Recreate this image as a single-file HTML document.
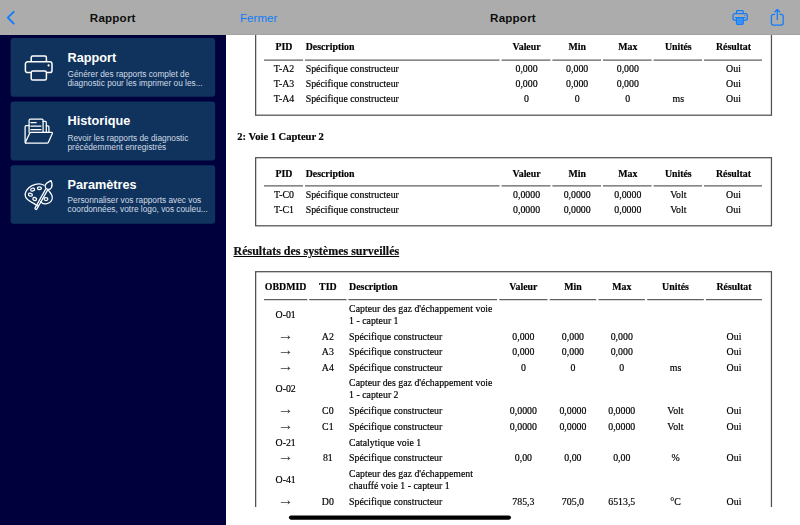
<!DOCTYPE html>
<html lang="fr">
<head>
<meta charset="utf-8">
<title>Rapport</title>
<style>
*{box-sizing:border-box;margin:0;padding:0}
html,body{width:800px;height:525px;overflow:hidden;background:#fff}
body{position:relative;font-family:"Liberation Sans",sans-serif}
#side{position:absolute;left:0;top:0;width:226px;height:525px;background:#00003d;overflow:hidden}
.nav{position:absolute;top:0;height:35px;background:#acacac;z-index:5}
.nav .title{position:absolute;top:10.5px;font-size:11.6px;letter-spacing:.2px;line-height:14px;font-weight:bold;color:#0e0e0e;text-align:center;left:0;width:100%}
#nav1{left:0;width:226.5px;border-right:1px solid #b4b4b4}
#nav2{left:226px;width:574px;border-bottom:1px solid #a3a3a3}
#side h2{position:absolute;left:67.5px;font-size:12.7px;line-height:15px;font-weight:bold;color:#fff;white-space:nowrap}
#side p{position:absolute;left:67.5px;font-size:8.3px;line-height:9.2px;color:#d3dbe6;white-space:nowrap}
#sideart{position:absolute;left:0;top:0}
#fermer{position:absolute;left:14px;top:10.5px;font-size:11.6px;line-height:14px;color:#0f7cf8}
#doc{-webkit-text-stroke:.18px #000;will-change:transform;position:absolute;left:0;top:0;width:800px;height:507px;overflow:hidden;font-family:"Liberation Serif",serif;font-size:9.85px;line-height:12px;color:#000}
.r{position:absolute;left:0;width:800px;height:12px}
.c{position:absolute;top:0;height:12px;text-align:center;white-space:nowrap}
.c.l{text-align:left;padding-left:.7px}
.h{font-weight:bold}
.ar{-webkit-text-stroke:0;position:absolute;left:0;width:100%;top:-2px;color:#3a3a3a;font-weight:normal;font-size:15.8px;line-height:12px}
#lines{position:absolute;left:0;top:0}
h4{position:absolute;left:237.3px;font-size:10.55px;line-height:12px;font-weight:bold;color:#000;white-space:nowrap}
h3{position:absolute;left:233.5px;font-size:12px;line-height:14px;font-weight:bold;color:#111;text-decoration:underline;white-space:nowrap}
#home{position:absolute;left:0;top:513px}
</style>
</head>
<body>
<div id="side">
<svg id="sideart" width="226" height="525" viewBox="0 0 226 525">
<g fill="#0f335d"><rect x="10.6" y="38" width="204.5" height="58.7" rx="3"/><rect x="10.6" y="101.6" width="204.5" height="58.8" rx="3"/><rect x="10.6" y="165.3" width="204.5" height="58.5" rx="3"/></g>
<g transform="translate(10.5 38)" fill="none" stroke="#fff" stroke-linejoin="round" stroke-width="1.5"><path d="M20.7 23.8V19.6a1.5 1.5 0 0 1 1.5-1.5H34.4a1.5 1.5 0 0 1 1.5 1.5V23.8"/>
      <path d="M20.7 34.6H17.1a2.2 2.2 0 0 1-2.2-2.2V26a2.2 2.2 0 0 1 2.2-2.2H39.3a2.2 2.2 0 0 1 2.2 2.2v6.4a2.2 2.2 0 0 1-2.2 2.2H35.9"/>
      <rect x="20.7" y="33.1" width="15.2" height="8.9" rx="1.6"/>
      <circle cx="38.1" cy="27.4" r="1.1" fill="#fff" stroke="none"/></g>
<g transform="translate(10.5 101.5)" fill="none" stroke="#fff" stroke-linejoin="round" stroke-width="1.25" stroke-linecap="round"><g transform="translate(-0.2 0.1)">
      <path d="M18.8 30.7V18.8a1.2 1.2 0 0 1 1.2-1.2H31.6a1.2 1.2 0 0 1 1.2 1.2V30.7"/>
      <path d="M20.6 20.9H25.9M20.6 24.5H30.7M20.6 27.9H30.7"/>
      <path d="M32.8 19.8H35a1 1 0 0 1 1 1V30.7"/>
      <path d="M36 24.2h1.6a1 1 0 0 1 1 1V30.7"/>
      <path d="M18.8 24.1H16a1.2 1.2 0 0 0-1.2 1.2V40.4a1.2 1.2 0 0 0 .6 1.1"/>
      <path d="M20.6 30.7H41.3a.8.8 0 0 1 .75 1.1L38 40.9a1.2 1.2 0 0 1-1.1.7H16a.8.8 0 0 1-.75-1.1L19.5 31.4a1.2 1.2 0 0 1 1.1-.7Z"/></g></g>
<g transform="translate(10.5 165)" fill="none" stroke="#fff" stroke-linejoin="round" stroke-width="1.25" stroke-linecap="round"><path d="M33.6 20.2C30.5 18.4 25.5 18.6 21.5 20.6C16.5 23.1 13.6 27.6 15 31.8C16.2 35.2 20 36.6 23.6 38.6C25.2 39.5 26.3 40.6 27.6 41"/>
      <path d="M30.4 36.6C31.2 38.4 33.6 39.3 36.3 38.7C40 37.9 42.4 34.8 41.7 31.3C41.2 28.9 39.4 27.6 38.2 25.6"/>
      <path d="M35.3 23.9L24.6 42.9a1 1 0 0 0 1.8 1L37.2 24.9"/>
      <path d="M40.5 15.6C41.6 18 42 20.5 41 22.5A3.3 3.3 0 1 1 35 19.6C36 17.8 38.5 16.8 40.5 15.6Z"/>
      <ellipse cx="22.1" cy="24.6" rx="2" ry="1.4" transform="rotate(-15 22.1 24.6)"/>
      <ellipse cx="28.9" cy="23.3" rx="2" ry="1.4"/>
      <ellipse cx="19.9" cy="29.7" rx="2" ry="1.4" transform="rotate(15 19.9 29.7)"/>
      <ellipse cx="24.2" cy="34" rx="1.9" ry="1.5" transform="rotate(25 24.2 34)"/>
      <ellipse cx="35.5" cy="34" rx="1.9" ry="1.5"/></g>
</svg>
<h2 style="top:51px">Rapport</h2>
<p style="top:70px">Générer des rapports complet de<br>diagnostic pour les imprimer ou les...</p>
<h2 style="top:114px">Historique</h2>
<p style="top:134px">Revoir les rapports de diagnostic<br>précédemment enregistrés</p>
<h2 style="top:178px">Paramètres</h2>
<p style="top:196px">Personnaliser vos rapports avec vos<br>coordonnées, votre logo, vos couleu...</p>
</div>
<div id="doc">
<svg id="lines" width="800" height="507" viewBox="0 0 800 507" fill="none" stroke="#505050" stroke-width="1.25"><rect x="255.65" y="20" width="515.8" height="95.2"/><line x1="264" x2="303" y1="60" y2="60" stroke="#606060"/><line x1="305" x2="499.5" y1="60" y2="60" stroke="#606060"/><line x1="501.6" x2="550.5" y1="60" y2="60" stroke="#606060"/><line x1="552.4" x2="601" y1="60" y2="60" stroke="#606060"/><line x1="603" x2="651.6" y1="60" y2="60" stroke="#606060"/><line x1="653.6" x2="702" y1="60" y2="60" stroke="#606060"/><line x1="704" x2="762" y1="60" y2="60" stroke="#606060"/><rect x="255.65" y="157.7" width="515.8" height="68.1"/><line x1="264" x2="303" y1="185.9" y2="185.9" stroke="#606060"/><line x1="305" x2="499.5" y1="185.9" y2="185.9" stroke="#606060"/><line x1="501.6" x2="550.5" y1="185.9" y2="185.9" stroke="#606060"/><line x1="552.4" x2="601" y1="185.9" y2="185.9" stroke="#606060"/><line x1="603" x2="651.6" y1="185.9" y2="185.9" stroke="#606060"/><line x1="653.6" x2="702" y1="185.9" y2="185.9" stroke="#606060"/><line x1="704" x2="762" y1="185.9" y2="185.9" stroke="#606060"/><rect x="255.65" y="271.7" width="515.8" height="328.3"/><line x1="264" x2="307.3" y1="299.55" y2="299.55" stroke="#606060"/><line x1="309.2" x2="346.5" y1="299.55" y2="299.55" stroke="#606060"/><line x1="348.4" x2="497" y1="299.55" y2="299.55" stroke="#606060"/><line x1="499.3" x2="547.5" y1="299.55" y2="299.55" stroke="#606060"/><line x1="549.7" x2="596.2" y1="299.55" y2="299.55" stroke="#606060"/><line x1="598.5" x2="645" y1="299.55" y2="299.55" stroke="#606060"/><line x1="647.2" x2="703.8" y1="299.55" y2="299.55" stroke="#606060"/><line x1="706" x2="762" y1="299.55" y2="299.55" stroke="#606060"/></svg>
<div class="r h" style="top:41px"><span class="c" style="left:264.5px;width:39px">PID</span><span class="c l" style="left:305px;width:194.5px">Description</span><span class="c" style="left:502.1px;width:48.9px">Valeur</span><span class="c" style="left:552.9px;width:48.6px">Min</span><span class="c" style="left:603.5px;width:48.6px">Max</span><span class="c" style="left:654.1px;width:48.4px">Unités</span><span class="c" style="left:704.5px;width:58px">Résultat</span></div>

<div class="r" style="top:63px"><span class="c" style="left:264.5px;width:39px">T-A2</span><span class="c l" style="left:305px;width:194.5px">Spécifique constructeur</span><span class="c" style="left:502.1px;width:48.9px">0,000</span><span class="c" style="left:552.9px;width:48.6px">0,000</span><span class="c" style="left:603.5px;width:48.6px">0,000</span><span class="c" style="left:704.5px;width:58px">Oui</span></div>
<div class="r" style="top:78px"><span class="c" style="left:264.5px;width:39px">T-A3</span><span class="c l" style="left:305px;width:194.5px">Spécifique constructeur</span><span class="c" style="left:502.1px;width:48.9px">0,000</span><span class="c" style="left:552.9px;width:48.6px">0,000</span><span class="c" style="left:603.5px;width:48.6px">0,000</span><span class="c" style="left:704.5px;width:58px">Oui</span></div>
<div class="r" style="top:93px"><span class="c" style="left:264.5px;width:39px">T-A4</span><span class="c l" style="left:305px;width:194.5px">Spécifique constructeur</span><span class="c" style="left:502.1px;width:48.9px">0</span><span class="c" style="left:552.9px;width:48.6px">0</span><span class="c" style="left:603.5px;width:48.6px">0</span><span class="c" style="left:654.1px;width:48.4px">ms</span><span class="c" style="left:704.5px;width:58px">Oui</span></div>
<h4 style="top:131px">2: Voie 1 Capteur 2</h4>
<div class="r h" style="top:168px"><span class="c" style="left:264.5px;width:39px">PID</span><span class="c l" style="left:305px;width:194.5px">Description</span><span class="c" style="left:502.1px;width:48.9px">Valeur</span><span class="c" style="left:552.9px;width:48.6px">Min</span><span class="c" style="left:603.5px;width:48.6px">Max</span><span class="c" style="left:654.1px;width:48.4px">Unités</span><span class="c" style="left:704.5px;width:58px">Résultat</span></div>

<div class="r" style="top:189px"><span class="c" style="left:264.5px;width:39px">T-C0</span><span class="c l" style="left:305px;width:194.5px">Spécifique constructeur</span><span class="c" style="left:502.1px;width:48.9px">0,0000</span><span class="c" style="left:552.9px;width:48.6px">0,0000</span><span class="c" style="left:603.5px;width:48.6px">0,0000</span><span class="c" style="left:654.1px;width:48.4px">Volt</span><span class="c" style="left:704.5px;width:58px">Oui</span></div>
<div class="r" style="top:204px"><span class="c" style="left:264.5px;width:39px">T-C1</span><span class="c l" style="left:305px;width:194.5px">Spécifique constructeur</span><span class="c" style="left:502.1px;width:48.9px">0,0000</span><span class="c" style="left:552.9px;width:48.6px">0,0000</span><span class="c" style="left:603.5px;width:48.6px">0,0000</span><span class="c" style="left:654.1px;width:48.4px">Volt</span><span class="c" style="left:704.5px;width:58px">Oui</span></div>
<h3 style="top:244px">Résultats des systèmes surveillés</h3>
<div class="r h" style="top:281px"><span class="c" style="left:264px;width:43.3px">OBDMID</span><span class="c" style="left:309.2px;width:37.3px">TID</span><span class="c l" style="left:348.4px;width:148.6px">Description</span><span class="c" style="left:499.3px;width:48.2px">Valeur</span><span class="c" style="left:549.7px;width:46.5px">Min</span><span class="c" style="left:598.5px;width:46.5px">Max</span><span class="c" style="left:647.2px;width:56.6px">Unités</span><span class="c" style="left:706px;width:56px">Résultat</span></div>

<div class="r" style="top:309px"><span class="c" style="left:264px;width:43.3px">O-01</span></div><div class="r" style="top:303px"><span class="c l" style="left:348.4px;width:148.6px">Capteur des gaz d'échappement voie</span></div><div class="r" style="top:315px"><span class="c l" style="left:348.4px;width:148.6px">1 - capteur 1</span></div>
<div class="r" style="top:331px"><span class="c" style="left:264px;width:43.3px"><b class="ar">→</b></span><span class="c" style="left:309.2px;width:37.3px">A2</span><span class="c l" style="left:348.4px;width:148.6px">Spécifique constructeur</span><span class="c" style="left:499.3px;width:48.2px">0,000</span><span class="c" style="left:549.7px;width:46.5px">0,000</span><span class="c" style="left:598.5px;width:46.5px">0,000</span><span class="c" style="left:706px;width:56px">Oui</span></div>
<div class="r" style="top:346px"><span class="c" style="left:264px;width:43.3px"><b class="ar">→</b></span><span class="c" style="left:309.2px;width:37.3px">A3</span><span class="c l" style="left:348.4px;width:148.6px">Spécifique constructeur</span><span class="c" style="left:499.3px;width:48.2px">0,000</span><span class="c" style="left:549.7px;width:46.5px">0,000</span><span class="c" style="left:598.5px;width:46.5px">0,000</span><span class="c" style="left:706px;width:56px">Oui</span></div>
<div class="r" style="top:362px"><span class="c" style="left:264px;width:43.3px"><b class="ar">→</b></span><span class="c" style="left:309.2px;width:37.3px">A4</span><span class="c l" style="left:348.4px;width:148.6px">Spécifique constructeur</span><span class="c" style="left:499.3px;width:48.2px">0</span><span class="c" style="left:549.7px;width:46.5px">0</span><span class="c" style="left:598.5px;width:46.5px">0</span><span class="c" style="left:647.2px;width:56.6px">ms</span><span class="c" style="left:706px;width:56px">Oui</span></div>
<div class="r" style="top:383px"><span class="c" style="left:264px;width:43.3px">O-02</span></div><div class="r" style="top:377px"><span class="c l" style="left:348.4px;width:148.6px">Capteur des gaz d'échappement voie</span></div><div class="r" style="top:389px"><span class="c l" style="left:348.4px;width:148.6px">1 - capteur 2</span></div>
<div class="r" style="top:405px"><span class="c" style="left:264px;width:43.3px"><b class="ar">→</b></span><span class="c" style="left:309.2px;width:37.3px">C0</span><span class="c l" style="left:348.4px;width:148.6px">Spécifique constructeur</span><span class="c" style="left:499.3px;width:48.2px">0,0000</span><span class="c" style="left:549.7px;width:46.5px">0,0000</span><span class="c" style="left:598.5px;width:46.5px">0,0000</span><span class="c" style="left:647.2px;width:56.6px">Volt</span><span class="c" style="left:706px;width:56px">Oui</span></div>
<div class="r" style="top:421px"><span class="c" style="left:264px;width:43.3px"><b class="ar">→</b></span><span class="c" style="left:309.2px;width:37.3px">C1</span><span class="c l" style="left:348.4px;width:148.6px">Spécifique constructeur</span><span class="c" style="left:499.3px;width:48.2px">0,0000</span><span class="c" style="left:549.7px;width:46.5px">0,0000</span><span class="c" style="left:598.5px;width:46.5px">0,0000</span><span class="c" style="left:647.2px;width:56.6px">Volt</span><span class="c" style="left:706px;width:56px">Oui</span></div>
<div class="r" style="top:437px"><span class="c" style="left:264px;width:43.3px">O-21</span><span class="c l" style="left:348.4px;width:148.6px">Catalytique voie 1</span></div>
<div class="r" style="top:452px"><span class="c" style="left:264px;width:43.3px"><b class="ar">→</b></span><span class="c" style="left:309.2px;width:37.3px">81</span><span class="c l" style="left:348.4px;width:148.6px">Spécifique constructeur</span><span class="c" style="left:499.3px;width:48.2px">0,00</span><span class="c" style="left:549.7px;width:46.5px">0,00</span><span class="c" style="left:598.5px;width:46.5px">0,00</span><span class="c" style="left:647.2px;width:56.6px">%</span><span class="c" style="left:706px;width:56px">Oui</span></div>
<div class="r" style="top:474px"><span class="c" style="left:264px;width:43.3px">O-41</span></div><div class="r" style="top:468px"><span class="c l" style="left:348.4px;width:148.6px">Capteur des gaz d'échappement</span></div><div class="r" style="top:480px"><span class="c l" style="left:348.4px;width:148.6px">chauffé voie 1 - capteur 1</span></div>
<div class="r" style="top:496px"><span class="c" style="left:264px;width:43.3px"><b class="ar">→</b></span><span class="c" style="left:309.2px;width:37.3px">D0</span><span class="c l" style="left:348.4px;width:148.6px">Spécifique constructeur</span><span class="c" style="left:499.3px;width:48.2px">785,3</span><span class="c" style="left:549.7px;width:46.5px">705,0</span><span class="c" style="left:598.5px;width:46.5px">6513,5</span><span class="c" style="left:647.2px;width:56.6px">°C</span><span class="c" style="left:706px;width:56px">Oui</span></div>
</div>
<div class="nav" id="nav1">
  <svg width="30" height="35" viewBox="0 0 30 35" style="position:absolute;left:0;top:0"><path d="M13.7 11.8L7.8 17.7L13.7 23.6" fill="none" stroke="#0f7cf8" stroke-width="1.9" stroke-linecap="round" stroke-linejoin="round"/></svg>
  <div class="title">Rapport</div>
</div>
<div class="nav" id="nav2">
  <div id="fermer">Fermer</div>
  <div class="title">Rapport</div>
  <svg width="74" height="35" viewBox="726 0 74 35" style="position:absolute;left:500px;top:0" fill="none" stroke="#0f7cf8" stroke-width="1.25" stroke-linecap="round" stroke-linejoin="round">
    <path d="M736.5 13.4V11.4a.8.8 0 0 1 .8-.8h5.1a.8.8 0 0 1 .8.8V13.4"/>
    <rect x="733" y="13.6" width="14.3" height="6.6" rx="2"/>
    <path d="M735.2 17.6H745.2" stroke-width="1"/>
    <rect x="736.5" y="17.9" width="6.7" height="6.4" rx=".7" fill="#5a9df0"/>
    <path d="M738 20.3H741.8M738 22.2H741.8" stroke-width=".8"/>
    <circle cx="744.9" cy="15.5" r=".6" fill="#0f7cf8" stroke="none"/>
    <path d="M774.6 14.4H773.4a2 2 0 0 0-2 2V23.1a2 2 0 0 0 2 2H781.2a2 2 0 0 0 2-2V16.4a2 2 0 0 0-2-2H780"/>
    <path d="M777.3 19.7V9.6M775 11.8L777.3 9.5L779.6 11.8"/>
  </svg>
</div>
<svg id="home" width="800" height="12" viewBox="0 513 800 12"><rect x="288.9" y="515.5" width="222.1" height="4.2" rx="2.1" fill="#000"/></svg>
</body>
</html>
